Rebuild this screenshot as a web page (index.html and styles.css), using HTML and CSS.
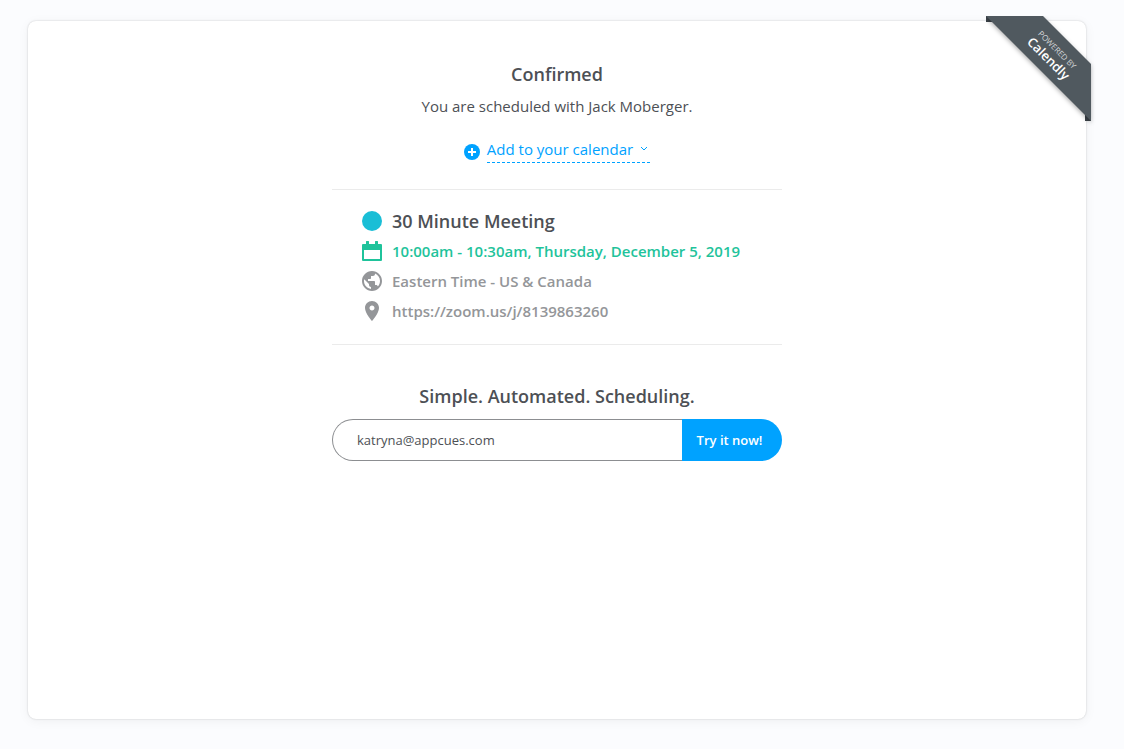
FILE: index.html
```html
<!DOCTYPE html>
<html lang="en">
<head>
	<meta charset="utf-8">
	<meta name="viewport" content="width=device-width, initial-scale=1">
	<title>Confirmed - Calendly</title>
	<link rel="stylesheet" href="styles.css">
</head>
<body>
<main class="card">
	<a class="badge" href="#" aria-label="Powered by Calendly">
		<svg width="117" height="117" viewBox="0 0 117 117">
			<path class="badge-fold" d="M0 0h6v6H0zM99 99h6v6h-6z"/>
			<path class="badge-band" d="M0 0h57l48 48v57z"/>
			<g transform="translate(67 38) rotate(45)" text-anchor="middle">
				<text class="badge-small" x="0" y="-3">POWERED BY</text>
				<text class="badge-name" x="0" y="11">Calendly</text>
			</g>
		</svg>
	</a>

	<div class="content">
		<header class="confirm">
			<h1>Confirmed</h1>
			<p>You are scheduled with Jack Moberger.</p>
			<a class="add-link" href="#">
				<svg width="16" height="16" viewBox="0 0 16 16">
					<circle cx="8" cy="8" r="8" fill="#00a2ff"/>
					<path d="M8 4v8M4 8h8" stroke="#fff" stroke-width="2"/>
				</svg>
				<span class="add-text">Add to your calendar
					<svg width="8" height="6" viewBox="0 0 8 6">
						<path d="M1 1l3 3 3-3" fill="none" stroke="#00a2ff"/>
					</svg>
				</span>
			</a>
		</header>

		<ul class="details">
			<li class="event">
				<svg width="20" height="20" viewBox="0 0 20 20"><circle cx="10" cy="10" r="10" fill="#1abed6"/></svg>
				<h2>30 Minute Meeting</h2>
			</li>
			<li class="time">
				<svg width="20" height="20" viewBox="0 0 20 20">
					<path fill="currentColor" fill-rule="evenodd" d="M4 1a1 1 0 0 1 3 0v2h6V1a1 1 0 0 1 3 0v2h3a1 1 0 0 1 1 1v15a1 1 0 0 1-1 1H1a1 1 0 0 1-1-1V4a1 1 0 0 1 1-1h3zM2 9v9h16V9z"/>
				</svg>
				10:00am - 10:30am, Thursday, December 5, 2019
			</li>
			<li>
				<svg width="20" height="20" viewBox="2 2 20 20">
					<path fill="currentColor" d="M12 2C6.48 2 2 6.48 2 12s4.48 10 10 10 10-4.48 10-10S17.52 2 12 2zm-1 17.93c-3.95-.49-7-3.85-7-7.93 0-.62.08-1.21.21-1.79L9 15v1c0 1.1.9 2 2 2v1.93zm6.9-2.54c-.26-.81-1-1.39-1.9-1.39h-1v-3c0-.55-.45-1-1-1H8v-2h2c.55 0 1-.45 1-1V7h2c1.1 0 2-.9 2-2v-.41c2.93 1.19 5 4.06 5 7.41 0 2.08-.8 3.97-2.1 5.39z"/>
				</svg>
				Eastern Time - US &amp; Canada
			</li>
			<li>
				<svg width="20" height="20" viewBox="2 2 20 20">
					<path fill="currentColor" d="M12 2C8.13 2 5 5.13 5 9c0 5.25 7 13 7 13s7-7.75 7-13c0-3.87-3.13-7-7-7zm0 9.5c-1.38 0-2.5-1.12-2.5-2.5s1.12-2.5 2.5-2.5 2.5 1.12 2.5 2.5-1.12 2.5-2.5 2.5z"/>
				</svg>
				https://zoom.us/j/8139863260
			</li>
		</ul>

		<h2 class="signup-title"><label for="email">Simple. Automated. Scheduling.</label></h2>
		<form class="signup">
			<input type="email" id="email" value="katryna@appcues.com">
			<button type="submit">Try it now!</button>
		</form>
	</div>
</main>
</body>
</html>
```
FILE: styles.css
```css
* {
	box-sizing: border-box;
}
body {
	margin: 0;
	min-height: 100vh;
	padding: 21px 38px 30px 28px;
	display: flex;
	background: #fbfcfe;
	color: #4d5055;
	font-family: "Open Sans", "Liberation Sans", sans-serif;
	font-size: 15px;
	line-height: 24px;
}
h1, h2, p, ul {
	margin: 0;
	padding: 0;
}
h1, h2 {
	font-size: 18px;
	font-weight: 600;
}
a {
	color: #00a2ff;
	text-decoration: none;
}
svg {
	flex: none;
}

.card {
	position: relative;
	flex: 1;
	padding: 41px 20px;
	background: #fff;
	border-radius: 8px;
	box-shadow: 0 0 2px rgba(0, 0, 0, 0.2), 0 2px 12px rgba(0, 0, 0, 0.05);
}
.content {
	max-width: 450px;
	margin: 0 auto;
}

/* corner ribbon, folded over the card edge */
.badge {
	position: absolute;
	top: -5px;
	right: -17px;
}
.badge svg {
	display: block;
}
.badge-band {
	fill: #50595f;
	filter: drop-shadow(0 2px 2px rgba(0, 0, 0, 0.3));
}
.badge-fold {
	fill: #3c4349;
}
.badge-small {
	fill: #d3d5d7;
	font-size: 8px;
}
.badge-name {
	fill: #fff;
	font-size: 13px;
	font-weight: 600;
}

.confirm {
	display: flex;
	flex-direction: column;
	align-items: center;
	gap: 8px;
	padding-bottom: 26px;
	border-bottom: 1px solid #ebebeb;
	text-align: center;
}
.add-link {
	display: flex;
	align-items: flex-end;
	gap: 7px;
	margin-top: 11px;
}
.add-link > svg {
	margin-bottom: 3px;
}
.add-text {
	display: flex;
	align-items: center;
	gap: 7px;
	padding: 0 2px 1px 0;
	border-bottom: 1px dashed #00a2ff;
}

.details {
	padding: 16px 30px 18px;
	border-bottom: 1px solid #ebebeb;
	list-style: none;
	color: #949699;
	font-weight: 600;
}
.details li {
	display: flex;
	align-items: center;
	gap: 10px;
	min-height: 30px;
}
.details .event {
	color: #4d5055;
}
.details .time {
	color: #1fc39b;
}

.signup-title {
	margin: 39px 0 11px;
	text-align: center;
}
.signup {
	display: flex;
	height: 42px;
}
.signup input {
	flex: 1;
	min-width: 0;
	padding: 0 24px;
	border: 1px solid #8c8e91;
	border-right: 0;
	border-radius: 21px 0 0 21px;
	background: #fff;
	color: #4d5055;
	font: inherit;
	font-size: 13px;
}
.signup button {
	width: 100px;
	padding: 0 5px 0 0;
	border: 0;
	border-radius: 0 21px 21px 0;
	background: #00a2ff;
	color: #fff;
	font: inherit;
	font-size: 13px;
	font-weight: 600;
}
```
